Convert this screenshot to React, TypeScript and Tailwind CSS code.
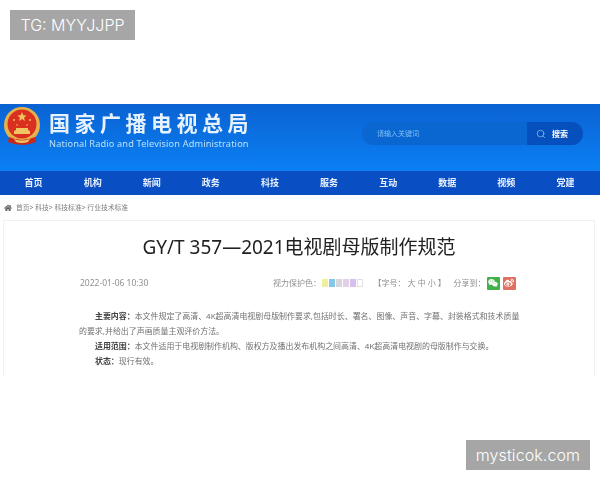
import React from 'react';
import { Search } from 'lucide-react';
import { FaHome, FaWeibo, FaWeixin } from 'react-icons/fa';

const navItems = ['首页', '机构', '新闻', '政务', '科技', '服务', '互动', '数据', '视频', '党建'];
const eyeColors = [
  'bg-[#eef0a0]',
  'bg-[#86c6e6]',
  'bg-[#d6d6dc]',
  'bg-[#e2d0e6]',
  'bg-[#d8c0ee]',
  'bg-white border border-[#e0e0e0]',
];

const Emblem = () => (
  <svg width="38" height="42" viewBox="0 0 38 42">
    <circle cx="19" cy="18" r="18" fill="#e6b04a" />
    <circle cx="19" cy="17" r="14.5" fill="#d9301f" />
    <path d="M19 5l1.3 3.2 3.4.2-2.6 2.2.8 3.3-2.9-1.8-2.9 1.8.8-3.3-2.6-2.2 3.4-.2z" fill="#f3c65a" />
    <circle cx="11" cy="13" r="1" fill="#f3c65a" />
    <circle cx="27" cy="13" r="1" fill="#f3c65a" />
    <circle cx="14" cy="18" r="0.8" fill="#f3c65a" />
    <circle cx="24" cy="18" r="0.8" fill="#f3c65a" />
    <path d="M11 27h16v-3l-2-1v-2h-12v2l-2 1z" fill="#f0c662" />
    <path d="M6 30q13 6 26 0l1 5q-14 6-28 0z" fill="#c9281c" />
    <path d="M11 32q8 3 16 0l-2 3q-6 2-12 0z" fill="#f0c662" />
  </svg>
);

const Header = () => (
  <header>
    <div className="flex h-[67px] justify-between bg-gradient-to-b from-[#0b62d2] to-[#0a80f4] pl-[3px] pr-[17px]">
      <div className="flex items-start pt-[3px]">
        <Emblem />
        <div className="ml-[8px] pt-[3px] text-[#e6f3ff]">
          <div className="text-[21px] font-bold leading-[26px] tracking-[4.5px]">国家广播电视总局</div>
          <div className="mt-[2px] text-[9.2px] leading-[12px] tracking-[0.15px] text-[#b9e0fb]">
            National Radio and Television Administration
          </div>
        </div>
      </div>
      <div className="mt-[18px] flex h-[23px] w-[221px] overflow-hidden rounded-full bg-[#0a66d0]">
        <div className="flex-1 pl-[15px] text-[7px] leading-[23px] text-[#7fc0f5]">请输入关键词</div>
        <div className="flex w-[56px] items-center bg-[#0650bd] pl-[9px] text-white">
          <Search size={10} strokeWidth={1.5} className="text-[#a8d4f8]" />
          <span className="ml-[6px] text-[8px] font-bold leading-none">搜索</span>
        </div>
      </div>
    </div>
    <nav className="grid h-[24px] grid-cols-10 bg-[#0a4ec4] pl-[4px] pr-[5px] text-center text-[9px] font-bold leading-[24px] text-[#eaf3ff]">
      {navItems.map((item) => (
        <span key={item}>{item}</span>
      ))}
    </nav>
  </header>
);

const Breadcrumb = () => (
  <div className="flex h-[25px] items-center pl-[4px] pt-[1px] text-[6.8px] text-[#808080]">
    <FaHome size={8} className="text-[#666666]" />
    <span className="ml-[4px] whitespace-pre">首页&gt; 科技&gt; 科技标准&gt; 行业技术标准</span>
  </div>
);

const MetaRow = () => (
  <div className="mt-[13px] flex h-[16px] items-center pl-[76px] text-[8.5px] text-[#909090]">
    <span className="w-[193px]">2022-01-06 10:30</span>
    <span className="w-[49px] text-[8px]">视力保护色：</span>
    <div className="flex gap-[1.5px]">
      {eyeColors.map((color, i) => (
        <span key={i} className={`h-[8px] w-[5.5px] ${color}`} />
      ))}
    </div>
    <span className="ml-[11px] w-[80px] whitespace-pre text-[8px]">【字号： 大 中 小 】</span>
    <span className="w-[33px] text-[8px]">分享到：</span>
    <div className="flex h-[13px] w-[13px] items-center justify-center rounded-[1px] bg-[#43b04a] text-white">
      <FaWeixin size={10} />
    </div>
    <div className="ml-[3px] flex h-[13px] w-[13px] items-center justify-center rounded-[1px] bg-[#e0705f] text-white">
      <FaWeibo size={10} />
    </div>
  </div>
);

const Article = () => (
  <article className="ml-[3px] mr-[5px] h-[157px] border-x border-t border-[#f1f1f1] bg-white pt-[11px]">
    <h1 className="text-center text-[19px] leading-[30px] text-[#222222]">GY/T 357—2021电视剧母版制作规范</h1>
    <MetaRow />
    <div className="mt-[18px] w-[518px] pl-[75px] text-[7.95px] leading-[15px] text-[#707070]">
      <p className="indent-[16px]">
        <b className="text-[#444444]">主要内容：</b>本文件规定了高清、4K超高清电视剧母版制作要求,包括时长、署名、图像、声音、字幕、封装格式和技术质量的要求,并给出了声画质量主观评价方法。
      </p>
      <p className="indent-[16px]">
        <b className="text-[#444444]">适用范围：</b>本文件适用于电视剧制作机构、版权方及播出发布机构之间高清、4K超高清电视剧的母版制作与交换。
      </p>
      <p className="indent-[16px]">
        <b className="text-[#444444]">状态：</b>现行有效。
      </p>
    </div>
  </article>
);

export default function App() {
  return (
    <div
      className="relative h-[480px] w-[600px] overflow-hidden bg-white pt-[104px]"
      style={{ fontFamily: '"Noto Sans", "Noto Sans CJK SC", sans-serif' }}
    >
      <div className="h-[272px] overflow-hidden blur-[0.3px]">
        <Header />
        <Breadcrumb />
        <Article />
      </div>
      <div className="absolute left-[10px] top-[10px] flex h-[30px] w-[125px] items-center justify-center bg-[#a6a6a6] text-[16px] font-light text-white" style={{ fontFamily: 'Inter, sans-serif' }}>
        TG: MYYJJPP
      </div>
      <div className="absolute left-[466px] top-[440px] flex h-[30px] w-[124px] items-center justify-center bg-[#a6a6a6] text-[16px] font-light tracking-[0.1px] text-white" style={{ fontFamily: 'Inter, sans-serif' }}>
        mysticok.com
      </div>
    </div>
  );
}
